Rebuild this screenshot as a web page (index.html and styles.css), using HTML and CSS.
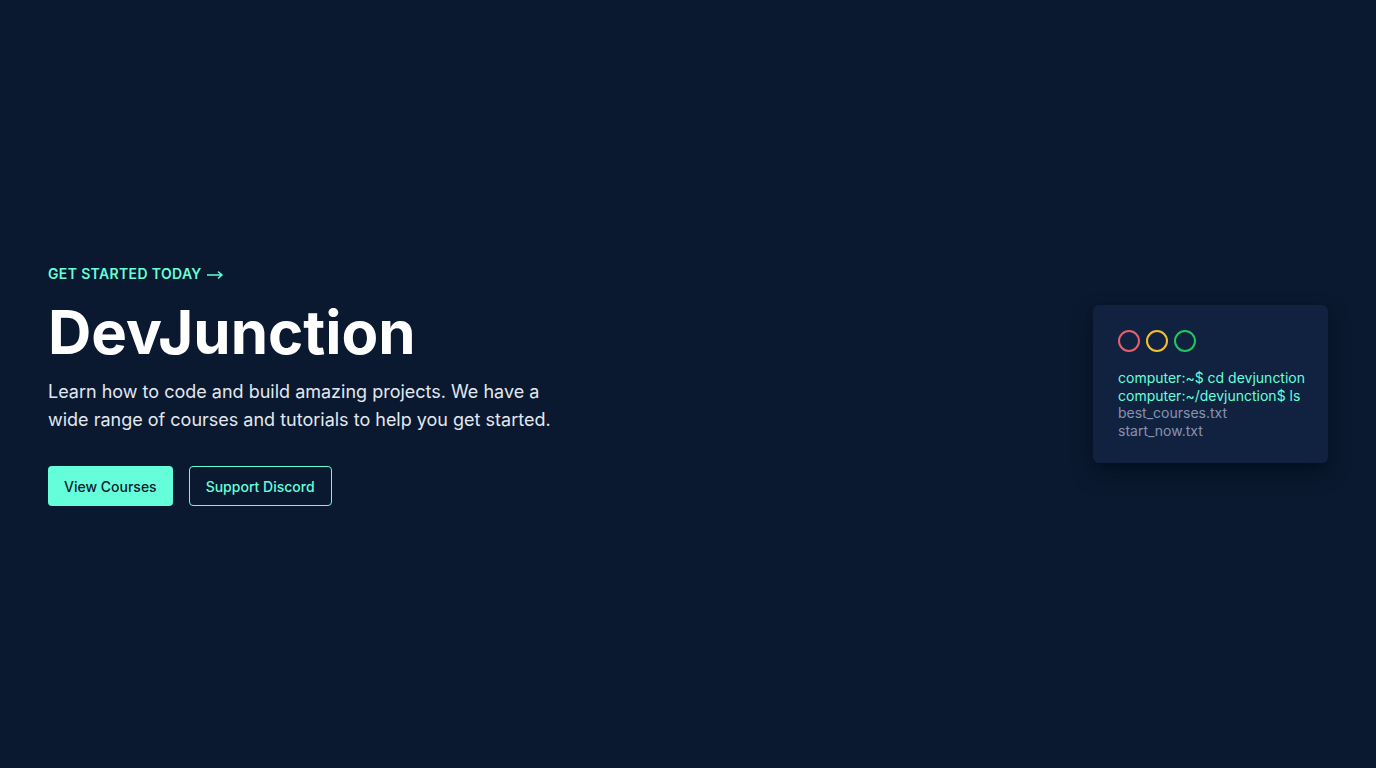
FILE: index.html
```html
<!DOCTYPE html>
<html lang="en">
<head>
<meta charset="utf-8">
<title>DevJunction</title>
<link rel="stylesheet" href="styles.css">
</head>
<body>
<main class="hero">
  <section class="intro">
    <p class="eyebrow">Get started today <svg class="arrow" width="16" height="8" viewBox="0 0 16 8" aria-hidden="true"><path d="M0.5 4H15M11.5 1L15 4L11.5 7" fill="none" stroke="currentColor" stroke-width="1.6" stroke-linecap="round" stroke-linejoin="round"/></svg></p>
    <h1 class="title">DevJunction</h1>
    <p class="lead">Learn how to code and build amazing projects. We have a wide range of courses and tutorials to help you get started.</p>
    <div class="actions">
      <a class="btn btn-primary" href="#">View Courses</a>
      <a class="btn btn-outline" href="#">Support Discord</a>
    </div>
  </section>
  <aside class="terminal">
    <div class="dots">
      <span class="dot dot-red"></span>
      <span class="dot dot-yellow"></span>
      <span class="dot dot-green"></span>
    </div>
    <div class="lines">
      <p class="cmd">computer:~$ cd devjunction</p>
      <p class="cmd">computer:~/devjunction$ ls</p>
      <p class="out">best_courses.txt</p>
      <p class="out">start_now.txt</p>
    </div>
  </aside>
</main>
</body>
</html>
```
FILE: styles.css
```css
* { box-sizing: border-box; }
html, body { margin: 0; padding: 0; }
body {
  background: #0a192f;
  font-family: Inter, "Noto Sans", sans-serif;
  color: #e2e8f0;
}
.hero {
  min-height: 768px;
  display: flex;
  align-items: center;
  justify-content: space-between;
  padding: 0 48px;
}
.intro { display: flex; flex-direction: column; margin-top: 2px; }
.eyebrow {
  margin: 0;
  display: flex;
  align-items: center;
  gap: 5px;
  font-size: 14px;
  line-height: 20px;
  font-weight: 600;
  letter-spacing: 0.35px;
  text-transform: uppercase;
  color: #64ffda;
}
.arrow { display: block; margin-top: 2px; }
.title {
  margin: 18px 0 0;
  font-size: 60px;
  line-height: 60px;
  font-weight: 700;
  color: #ffffff;
}
.lead {
  margin: 16px 0 0;
  max-width: 512px;
  font-size: 18px;
  line-height: 28px;
  color: #e2e8f0;
}
.actions {
  margin-top: 32px;
  display: flex;
  gap: 16px;
}
.btn {
  display: inline-flex;
  align-items: center;
  height: 40px;
  padding: 0 16px;
  border-radius: 4px;
  font-size: 14px;
  font-weight: 500;
  text-decoration: none;
}
.btn-primary { background: #64ffda; color: #0a192f; }
.btn-outline { color: #64ffda; border: 1px solid #64ffda; background: transparent; }
.terminal {
  width: 235px;
  background: #112240;
  border-radius: 6px;
  padding: 25px 24px 24px 25px;
  box-shadow: 0 10px 25px -5px rgba(2, 12, 27, 0.7), 0 4px 10px -4px rgba(2, 12, 27, 0.6);
}
.dots { display: flex; gap: 6px; }
.dot {
  width: 22px;
  height: 22px;
  border-radius: 50%;
  border: 2px solid;
}
.dot-red { border-color: #e4606d; }
.dot-yellow { border-color: #f4c030; }
.dot-green { border-color: #22c55e; }
.lines { margin-top: 17px; }
.lines p {
  margin: 0;
  font-size: 14px;
  line-height: 17.5px;
  white-space: nowrap;
}
.cmd { color: #64ffda; }
.out { color: #8892b0; }
```
